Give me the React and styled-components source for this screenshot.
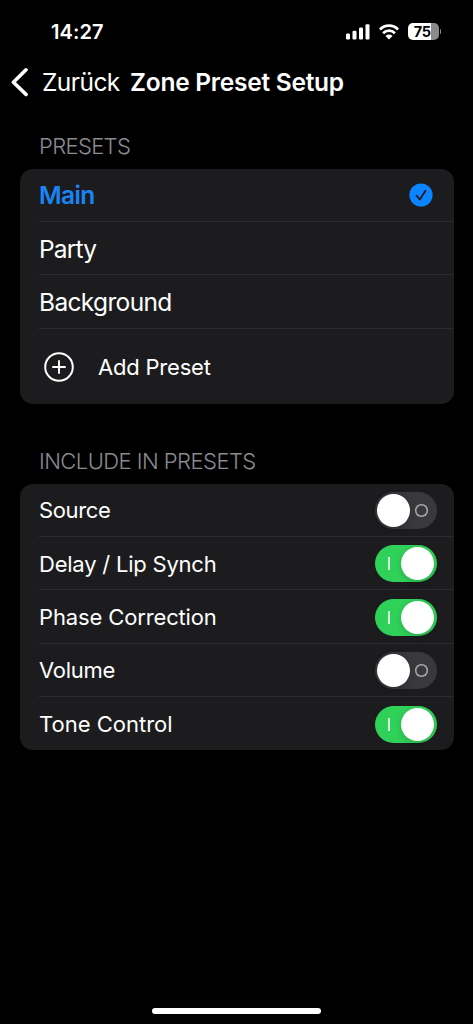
import React, { useState } from 'react';
import styled, { createGlobalStyle } from 'styled-components';

const PRESETS = [
  { name: 'Main', spacing: '-0.6px' },
  { name: 'Party', spacing: '-0.8px' },
  { name: 'Background', spacing: '-0.65px' },
];

const OPTIONS = [
  { name: 'Source', on: false, spacing: '-0.35px' },
  { name: 'Delay / Lip Synch', on: true, spacing: '-0.22px' },
  { name: 'Phase Correction', on: true, spacing: '-0.14px' },
  { name: 'Volume', on: false, spacing: '-0.25px' },
  { name: 'Tone Control', on: true, spacing: '0px' },
];

const SignalIcon = () => (
  <svg width="24" height="16" viewBox="0 0 24 16" fill="#fff">
    <rect x="0" y="9.5" width="4" height="6" rx="1.2" />
    <rect x="6.5" y="6.8" width="4" height="8.7" rx="1.2" />
    <rect x="13" y="3.5" width="4" height="12" rx="1.2" />
    <rect x="19.5" y="0.2" width="4" height="15.3" rx="1.2" />
  </svg>
);

const WifiIcon = () => (
  <svg width="20" height="16" viewBox="0 0 20 16" fill="none">
    <path d="M0.9 5.5a12.8 12.8 0 0 1 18.2 0" stroke="#fff" strokeWidth="2.8" />
    <path d="M4.1 9.2a8.2 8.2 0 0 1 11.8 0" stroke="#fff" strokeWidth="2.7" />
    <path d="M6.5 11.9a4.9 4.9 0 0 1 7 0L10 15.4z" fill="#fff" />
  </svg>
);

const CheckIcon = () => (
  <svg width="24" height="24" viewBox="0 0 24 24" fill="none">
    <circle cx="12" cy="12" r="11.6" fill="#0a84ff" />
    <path
      d="M7.5 12.6l3.3 3.9 5.7-8.7"
      stroke="#1c1c1e"
      strokeWidth="1.8"
      strokeLinecap="round"
      strokeLinejoin="round"
    />
  </svg>
);

const PlusIcon = () => (
  <svg width="30" height="30" viewBox="0 0 30 30" fill="none" stroke="#fff">
    <circle cx="15" cy="15" r="13.8" strokeWidth="2" />
    <path d="M15 9v12M9 15h12" strokeWidth="1.9" strokeLinecap="round" />
  </svg>
);

const BackIcon = () => (
  <svg width="18" height="30" viewBox="0 0 18 30" fill="none">
    <path
      d="M16 2.8L3.4 15.2l12.6 12.2"
      stroke="#fff"
      strokeWidth="3.6"
      strokeLinecap="round"
      strokeLinejoin="round"
    />
  </svg>
);

const App = () => {
  const [selected, setSelected] = useState('Main');
  const [options, setOptions] = useState(OPTIONS);

  const toggle = (name) => {
    setOptions(options.map((o) => (o.name === name ? { ...o, on: !o.on } : o)));
  };

  return (
    <Screen>
      <GlobalStyle />
      <StatusBar>
        <Clock>14:27</Clock>
        <StatusIcons>
          <SignalIcon />
          <WifiIcon />
          <Battery>
            <BatteryBody>75</BatteryBody>
            <BatteryTip />
          </Battery>
        </StatusIcons>
      </StatusBar>

      <NavBar>
        <BackIcon />
        <BackLabel>Zurück</BackLabel>
        <Title>Zone Preset Setup</Title>
      </NavBar>

      <SectionTitle $top="31px" $spacing="-0.65px">
        PRESETS
      </SectionTitle>
      <Card>
        {PRESETS.map(({ name, spacing }) => (
          <Row key={name} $height="53.4px" onClick={() => setSelected(name)}>
            <PresetName $active={name === selected} $spacing={spacing}>
              {name}
            </PresetName>
            {name === selected && <CheckIcon />}
          </Row>
        ))}
        <AddRow>
          <PlusIcon />
          <Label $spacing="-0.2px">Add Preset</Label>
        </AddRow>
      </Card>

      <SectionTitle $top="43.3px" $spacing="-0.55px">
        INCLUDE IN PRESETS
      </SectionTitle>
      <Card>
        {options.map(({ name, on, spacing }) => (
          <Row key={name} $height="53.33px" $toggle>
            <Label $spacing={spacing}>{name}</Label>
            <Switch
              role="switch"
              aria-checked={on}
              $on={on}
              onClick={() => toggle(name)}
            >
              <Knob />
              {on ? <OnMark /> : <OffMark />}
            </Switch>
          </Row>
        ))}
      </Card>

      <HomeIndicator />
    </Screen>
  );
};

export default App;

const GlobalStyle = createGlobalStyle`
  * {
    box-sizing: border-box;
  }
  body {
    margin: 0;
    background: #000;
    color: #fff;
    font-family: Inter, "Liberation Sans", sans-serif;
  }
  svg {
    display: block;
    flex-shrink: 0;
  }
`;

const Screen = styled.main`
  display: flex;
  flex-direction: column;
  width: 473px;
  height: 1024px;
  overflow: hidden;
  background: #000;
`;

const StatusBar = styled.header`
  display: flex;
  justify-content: space-between;
  align-items: center;
  height: 63px;
  padding: 0 32px 0 51px;
`;

const Clock = styled.span`
  font-size: 20px;
  font-weight: 600;
  letter-spacing: 0.1px;
`;

const StatusIcons = styled.div`
  display: flex;
  align-items: center;
  gap: 9px;
`;

const Battery = styled.div`
  display: flex;
  align-items: center;
  gap: 1px;
`;

const BatteryBody = styled.span`
  width: 30.5px;
  height: 17px;
  padding-right: 2px;
  border-radius: 5px;
  background: linear-gradient(90deg, #fff 75%, #8a8a8c 75%);
  color: #000;
  font-size: 14.5px;
  font-weight: 700;
  line-height: 17px;
  letter-spacing: -0.4px;
  text-align: center;
`;

const BatteryTip = styled.span`
  width: 1.5px;
  height: 5px;
  border-radius: 0 2px 2px 0;
  background: #8a8a8c;
`;

const NavBar = styled.nav`
  display: flex;
  align-items: center;
  height: 38px;
  padding-left: 10px;
  white-space: nowrap;
`;

const BackLabel = styled.span`
  width: 88px;
  margin-left: 14px;
  font-size: 24.5px;
  letter-spacing: -0.55px;
`;

const Title = styled.h1`
  margin: 0;
  font-size: 24.5px;
  font-weight: 600;
  letter-spacing: -0.25px;
`;

const SectionTitle = styled.h2`
  display: flex;
  align-items: center;
  height: 28px;
  margin: ${({ $top }) => $top} 0 8.5px 39px;
  color: #8b8b90;
  font-size: 22px;
  font-weight: 350;
  letter-spacing: ${({ $spacing }) => $spacing};
`;

const Card = styled.section`
  display: flex;
  flex-direction: column;
  margin: 0 19.5px;
  border-radius: 13px;
  background: #1c1c1e;
`;

const Row = styled.div`
  display: flex;
  justify-content: space-between;
  align-items: center;
  height: ${({ $height }) => $height};
  margin-left: 19.5px;
  padding: 1px ${({ $toggle }) => ($toggle ? '17px' : '21px')} 0 0;
  border-bottom: 1px solid #2b2b2d;
  &:last-child {
    border-bottom: none;
  }
`;

const AddRow = styled.div`
  display: flex;
  align-items: center;
  gap: 24px;
  height: 75.3px;
  padding: 1px 0 0 24.5px;
`;

const PresetName = styled.span`
  padding-top: 0.5px;
  color: ${({ $active }) => ($active ? '#1a84f5' : '#fff')};
  font-size: 24.5px;
  font-weight: ${({ $active }) => ($active ? 600 : 400)};
  letter-spacing: ${({ $spacing }) => $spacing};
`;

const Label = styled.span`
  font-size: 22px;
  letter-spacing: ${({ $spacing }) => $spacing};
`;

const Switch = styled.button`
  display: flex;
  align-items: center;
  justify-content: space-between;
  flex-direction: ${({ $on }) => ($on ? 'row-reverse' : 'row')};
  width: 62px;
  height: 37px;
  padding: 0 ${({ $on }) => ($on ? '2.5px 0 13px' : '9px 0 2px')};
  border: none;
  border-radius: 19px;
  background: ${({ $on }) => ($on ? '#30d158' : '#39393d')};
`;

const Knob = styled.span`
  width: 33px;
  height: 33px;
  border-radius: 50%;
  background: #fff;
  box-shadow: 0 2px 6px rgba(0, 0, 0, 0.18);
`;

const OnMark = styled.span`
  width: 2px;
  height: 13px;
  background: #d6f6de;
`;

const OffMark = styled.span`
  width: 12.5px;
  height: 12.5px;
  border-radius: 50%;
  box-shadow: inset 0 0 0 1.5px #a9a9ac;
`;

const HomeIndicator = styled.div`
  width: 169px;
  height: 6px;
  margin: auto auto 10px;
  border-radius: 3px;
  background: #fff;
`;
